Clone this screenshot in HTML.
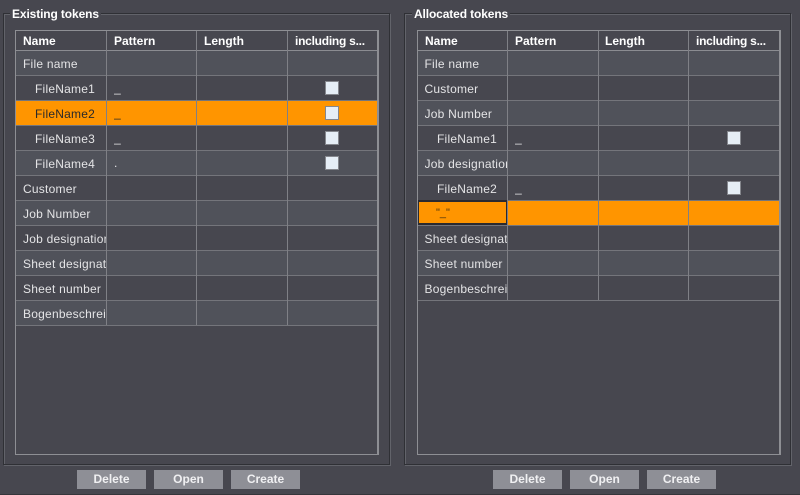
<!DOCTYPE html>
<html>
<head>
<meta charset="utf-8">
<style>
html,body{margin:0;padding:0;width:800px;height:495px;overflow:hidden;background:#47474f;}
body{position:relative;font-family:"Liberation Sans",sans-serif;font-size:12px;color:#e4e4e6;}
.r{position:absolute;box-sizing:border-box;}
.lg{position:absolute;top:7px;background:#47474f;color:#fff;font-weight:bold;font-size:12px;line-height:14px;padding:0 2px;white-space:nowrap;letter-spacing:-.12px;}
.t{position:absolute;top:30px;width:364px;height:425px;box-sizing:border-box;padding:1px 1px 0 1px;overflow:hidden;}
.frame{position:absolute;left:0;top:0;width:364px;height:425px;box-sizing:border-box;border:1px solid #8e8f94;border-right-width:2px;pointer-events:none;}
.v{position:absolute;top:0;width:1px;background:#7f8086;}
.row{position:relative;height:25px;box-sizing:border-box;border-bottom:1px solid #74757b;line-height:26px;white-space:nowrap;}
.h{height:20px;line-height:20px;font-weight:bold;color:#fff;border-bottom-color:#8b8c91;}
.l{background:#50525a;}
.d{background:#47474f;}
.s{background:#ff9500;color:#2a2a2a;}
.row span{position:absolute;top:0;overflow:hidden;}
.row span.u{line-height:24px;}
.n{left:7px;width:83px;}
.i{left:19px;width:71px;}
.n,.i{letter-spacing:.23px;}
.x .n{left:6.5px;width:83.5px;}
.c{position:absolute;top:5px;width:12px;height:12px;background:#e6eef6;border:1px solid #85878d;}
.f{position:absolute;left:-1px;top:-1px;width:91px;height:25px;box-sizing:border-box;border:2px solid #2a2a30;}
.q{position:absolute;left:17px;top:0;font-size:11px;color:#4a3410;letter-spacing:0;line-height:22px;}
.b{position:absolute;top:470px;width:69px;height:19px;background:#8e8f96;color:#f0f0f2;font-weight:bold;font-size:12px;line-height:19px;text-align:center;}
</style>
</head>
<body>
<div class="r" style="left:4px;top:14px;width:387px;height:452px;border:1px solid #62636a;"></div>
<div class="r" style="left:3px;top:13px;width:387px;height:452px;border:1px solid #2f3035;"></div>
<div class="r" style="left:405px;top:14px;width:387px;height:452px;border:1px solid #62636a;"></div>
<div class="r" style="left:404px;top:13px;width:387px;height:452px;border:1px solid #2f3035;"></div>
<div class="lg" style="left:10px;">Existing tokens</div>
<div class="lg" style="left:412px;">Allocated tokens</div>

<div class="t" style="left:15px;">
<div class="row h"><span style="left:7px">Name</span><span style="left:98px">Pattern</span><span style="left:188px">Length</span><span style="left:279px;letter-spacing:-.25px">including s...</span></div>
<div class="row l"><span class="n">File name</span></div>
<div class="row d"><span class="i">FileName1</span><span class="u" style="left:98px">_</span><i class="c" style="left:309px"></i></div>
<div class="row s"><span class="i">FileName2</span><span class="u" style="left:98px">_</span><i class="c" style="left:309px"></i></div>
<div class="row d"><span class="i">FileName3</span><span class="u" style="left:98px">_</span><i class="c" style="left:309px"></i></div>
<div class="row l"><span class="i">FileName4</span><span class="u" style="left:98px">.</span><i class="c" style="left:309px"></i></div>
<div class="row d"><span class="n">Customer</span></div>
<div class="row l"><span class="n">Job Number</span></div>
<div class="row d"><span class="n">Job designation</span></div>
<div class="row l"><span class="n">Sheet designation</span></div>
<div class="row d"><span class="n">Sheet number</span></div>
<div class="row l"><span class="n">Bogenbeschreibung</span></div>
<div class="v" style="left:91px;height:295px"></div>
<div class="v" style="left:181px;height:295px"></div>
<div class="v" style="left:272px;height:295px"></div>
<div class="frame"></div>
</div>

<div class="t x" style="left:417px;">
<div class="row h"><span style="left:7px">Name</span><span style="left:97px">Pattern</span><span style="left:187px">Length</span><span style="left:278px;letter-spacing:-.25px">including s...</span></div>
<div class="row l"><span class="n">File name</span></div>
<div class="row d"><span class="n">Customer</span></div>
<div class="row l"><span class="n">Job Number</span></div>
<div class="row d"><span class="i">FileName1</span><span class="u" style="left:97px">_</span><i class="c" style="left:309px"></i></div>
<div class="row l"><span class="n">Job designation</span></div>
<div class="row d"><span class="i">FileName2</span><span class="u" style="left:97px">_</span><i class="c" style="left:309px"></i></div>
<div class="row s"><div class="f"><span class="q">"_"</span></div></div>
<div class="row d"><span class="n">Sheet designation</span></div>
<div class="row l"><span class="n">Sheet number</span></div>
<div class="row d"><span class="n">Bogenbeschreibung</span></div>
<div class="v" style="left:90px;height:270px"></div>
<div class="v" style="left:181px;height:270px"></div>
<div class="v" style="left:271px;height:270px"></div>
<div class="frame"></div>
</div>

<div class="b" style="left:77px;">Delete</div>
<div class="b" style="left:154px;">Open</div>
<div class="b" style="left:231px;">Create</div>
<div class="b" style="left:493px;">Delete</div>
<div class="b" style="left:570px;">Open</div>
<div class="b" style="left:647px;">Create</div>
<div class="r" style="left:0;top:494px;width:800px;height:1px;background:#35363b;"></div>
</body>
</html>
